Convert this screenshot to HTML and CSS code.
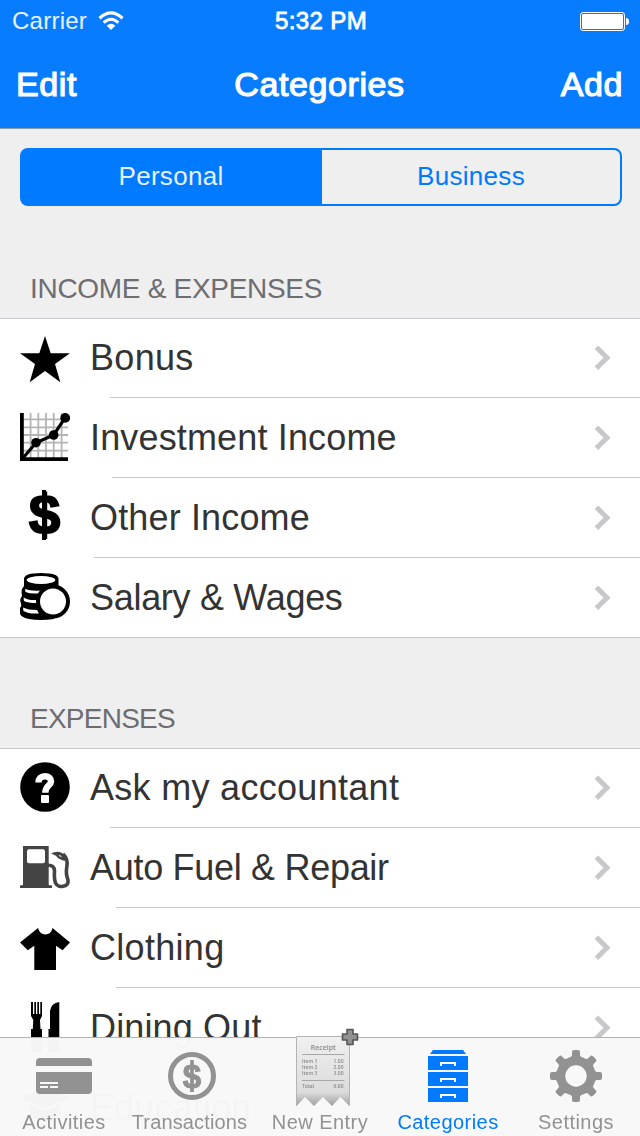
FILE: index.html
```
<!DOCTYPE html>
<html lang="en">
<head>
    <meta charset="UTF-8">
    <meta name="viewport" content="width=device-width, initial-scale=1.0">
    <title>Categories</title>
    <link rel="stylesheet" href="styles.css">
</head>
<body>
    <svg width="0" height="0" class="defs">
        <symbol id="chevron" viewBox="0 0 18 28">
            <path d="M3.400 3.200 L14 13.700 L3.400 24.200" fill="none" stroke="#c7c7cc" stroke-width="5"/>
        </symbol>
    </svg>

    <header class="header">
        <div class="status-bar">
            <div class="carrier">
                <span>Carrier</span>
                <svg class="wifi" width="26" height="20" viewBox="0 0 26 20">
                    <path d="M1.5 7.2 Q13 -3.4 24.5 7.2" fill="none" stroke="#fff" stroke-width="3.2"/>
                    <path d="M5.6 11.6 Q13 4.8 20.4 11.6" fill="none" stroke="#fff" stroke-width="3"/>
                    <path d="M8.7 14.8 Q13 10.6 17.3 14.8 L13 19 Z" fill="#fff"/>
                </svg>
            </div>
            <div class="time">5:32 PM</div>
            <svg class="battery" width="50" height="20" viewBox="0 0 50 20">
                <rect x="0.5" y="1.5" width="44" height="18" rx="2.5" fill="none" stroke="#fff"/>
                <rect x="2" y="3" width="41" height="15" rx="1.2" fill="#fff"/>
                <path d="M46 7 Q49 7 49 10.5 Q49 14 46 14 Z" fill="#fff"/>
            </svg>
        </div>
        <nav class="nav-bar">
            <a class="nav-button">Edit</a>
            <h1>Categories</h1>
            <a class="nav-button right">Add</a>
        </nav>
    </header>

    <main class="content">
        <div class="segmented">
            <div class="segment active">Personal</div>
            <div class="segment">Business</div>
        </div>

        <h2 class="first">INCOME &amp; EXPENSES</h2>
        <ul class="list">
            <li class="row">
                <svg class="icon" viewBox="0 0 50 50">
                    <path d="M25 3 L30.7 20.2 H50 L35 31 L40.3 49.3 L25 38 L9.7 49.3 L15 31 L0 20.2 H19.3 Z"/>
                </svg>
                <span class="label wide">Bonus</span>
                <svg class="chevron"><use href="#chevron"/></svg>
            </li>
            <li class="row inset-112">
                <svg class="icon" viewBox="0 0 50 50">
                    <path d="M10.6 0 V45 M18.3 0 V45 M26 0 V45 M33.7 0 V45 M41.6 0 V45 M3 6.3 H48 M3 14.3 H48 M3 22 H48 M3 29.7 H48 M3 37.7 H48" stroke="#b4b4b4" stroke-width="1.8"/>
                    <path d="M0 0 H3.8 V44.3 H48 V48 H0 Z"/>
                    <path d="M3.5 44.5 L16 29.7 L33.7 22 L45.2 4.7" fill="none" stroke="#000" stroke-width="3.2"/>
                    <circle cx="16" cy="29.7" r="4.8"/>
                    <circle cx="33.7" cy="22" r="4.8"/>
                    <circle cx="45.2" cy="4.9" r="4.9"/>
                </svg>
                <span class="label">Investment Income</span>
                <svg class="chevron"><use href="#chevron"/></svg>
            </li>
            <li class="row inset-94">
                <svg class="icon" viewBox="0 0 50 50">
                    <text x="24.600" y="41" class="dollar">$</text>
                    <path d="M24 -3 V47" stroke="#000" stroke-width="4"/>
                </svg>
                <span class="label">Other Income</span>
                <svg class="chevron"><use href="#chevron"/></svg>
            </li>
            <li class="row last">
                <svg class="icon" viewBox="0 0 50 50">
                    <path d="M4 6 Q4 0 21 0 Q38.5 0 38.5 6 V14 L34 46 Q20 48 9 46 Q0 44 0 40 V35 Q2 33 1 30 Q-1 27 2 23 Q1 19 2 16 L4 13 Z"/>
                    <ellipse cx="21" cy="7" rx="14.3" ry="4" fill="#fff"/>
                    <path d="M5 16 Q11 18.500 22 17.500 L18 20.500 Q10 21 5.500 19 Z" fill="#fff"/>
                    <path d="M3.500 24.500 Q8 27.500 17 27 L16.500 30 Q8 30 4 28 Z" fill="#fff"/>
                    <path d="M3 34.500 Q8 37 17 37 L19 40.500 Q8 41 3.500 38 Z" fill="#fff"/>
                    <circle cx="33" cy="28.500" r="15" fill="#fff" stroke="#000" stroke-width="4"/>
                </svg>
                <span class="label narrow">Salary &amp; Wages</span>
                <svg class="chevron"><use href="#chevron"/></svg>
            </li>
        </ul>

        <h2 class="second">EXPENSES</h2>
        <ul class="list">
            <li class="row">
                <svg class="icon" viewBox="0 0 50 50">
                    <circle cx="25" cy="24" r="24.8"/>
                    <path d="M18.500 19.500 C18.500 15.500 21 13.200 25 13.200 C28.500 13.200 31 15.500 31 18.500 C31 23 25.300 22 25.300 29.800" fill="none" stroke="#fff" stroke-width="6.400"/>
                    <rect x="21" y="32" width="8" height="8" rx="1" fill="#fff"/>
                </svg>
                <span class="label wide">Ask my accountant</span>
                <svg class="chevron"><use href="#chevron"/></svg>
            </li>
            <li class="row inset-116">
                <svg class="icon" viewBox="0 0 50 50">
                    <path d="M3 3 H28.700 V42 L32 42.500 V45 H0 V42.500 L3 42 Z" fill="#444"/>
                    <rect x="7" y="6.300" width="18" height="14" rx="2" fill="#fff"/>
                    <path d="M28 22.200 Q34.500 22 34.500 28 Q34 36 35.500 40 Q38 44.500 43 43.300 Q48.800 42.500 48 37 Q45.500 31 46.800 24 Q48.500 16 43 11" fill="none" stroke="#444" stroke-width="3.600"/>
                    <path d="M31 10.500 Q37 7.500 42 10 Q46 12 47.500 18 L43 17.500 Q38 16 36 12.800 Z" fill="#444"/>
                    <path d="M39 12.500 L41.500 13.500" stroke="#fff" stroke-width="1"/>
                </svg>
                <span class="label narrow">Auto Fuel &amp; Repair</span>
                <svg class="chevron"><use href="#chevron"/></svg>
            </li>
            <li class="row inset-116">
                <svg class="icon" viewBox="0 0 50 50">
                    <path d="M18 5 Q20 11.500 25.300 11.500 Q31 11.500 32.500 5 L50 19.500 L42.500 27.200 L36 22.700 V47 H14.300 V22.700 L7.800 27.200 L0 19.500 Z"/>
                </svg>
                <span class="label wide">Clothing</span>
                <svg class="chevron"><use href="#chevron"/></svg>
            </li>
            <li class="row">
                <svg class="icon" viewBox="0 0 50 50">
                    <path d="M11 -1 H13 V11 H14.300 V-1 H16 V11 H17.300 V-1 H19 V11 H20.300 V-1 H22 V13 L20 17 L20.500 26 H22 V49 H11 V26 H12.800 L13.300 17 L11 13 Z"/>
                    <path d="M39.300 -1 V49 H28.500 V26 H30 V8 Q31 0 39.300 -1 Z"/>
                </svg>
                <span class="label">Dining Out</span>
                <svg class="chevron"><use href="#chevron"/></svg>
            </li>
            <li class="row">
                <svg class="icon" viewBox="0 0 50 50">
                    <path d="M25 5 L50 15 L25 25 L0 15 Z M10 22 L25 28 L40 22 V33 Q25 43 10 33 Z"/>
                </svg>
                <span class="label">Education</span>
            </li>
        </ul>
    </main>

    <footer class="tab-bar">
        <a class="tab">
            <svg class="tab-icon" viewBox="0 0 80 72">
                <path d="M12 28 V24 Q12 20 16 20 H64 Q68 20 68 24 V28 Z M12 34 H68 V52 Q68 56 64 56 H16 Q12 56 12 52 Z"/>
                <path d="M16 45 H34 M16 49 H24 M26 49 H34" stroke="#f7f7f7" stroke-width="2"/>
            </svg>
            <span>Activities</span>
        </a>
        <a class="tab transactions">
            <svg class="tab-icon" viewBox="0 0 80 72">
                <circle cx="40" cy="38" r="21.5" fill="none" stroke="#929292" stroke-width="5"/>
                <text x="40" y="49.500" class="coin-sign">$</text>
                <path d="M40 22 V54" stroke="#929292" stroke-width="3.600"/>
            </svg>
            <span>Transactions</span>
        </a>
        <a class="tab">
            <svg class="tab-icon" viewBox="0 0 80 72">
                <defs>
                    <linearGradient id="paper" x1="0" y1="0" x2="0" y2="1">
                        <stop offset="0" stop-color="#f0f0f0"/>
                        <stop offset="0.8" stop-color="#dcdcdc"/>
                        <stop offset="1" stop-color="#a0a0a0"/>
                    </linearGradient>
                </defs>
                <path d="M16.500 -1.500 H69.500 V68 L60.500 59 L52 68 L43 59 L34 68 L25 59 L16.500 68 Z" fill="url(#paper)"/>
                <path d="M16.500 68 V-1.500 H69.500 V68" fill="none" stroke="#b4b4b4"/>
                <path d="M22 16.500 H64.500 M22 42.500 H64.500" stroke="#a8a8a8"/>
                <g class="receipt-text">
                    <text x="43.300" y="12" class="receipt-title">Receipt</text>
                    <text x="22" y="24.500">Item 1</text>
                    <text x="63.500" y="24.500" class="amount">1.00</text>
                    <text x="22" y="31">Item 2</text>
                    <text x="63.500" y="31" class="amount">2.00</text>
                    <text x="22" y="37.300">Item 3</text>
                    <text x="63.500" y="37.300" class="amount">3.00</text>
                    <text x="22" y="50">Total</text>
                    <text x="63.500" y="50" class="amount">6.00</text>
                </g>
                <path d="M67 -8.500 H73 V-4 H77.500 V2 H73 V6.500 H67 V2 H62.500 V-4 H67 Z" fill="#919191" stroke="#555" stroke-width="1.600" stroke-linejoin="round"/>
            </svg>
            <span>New Entry</span>
        </a>
        <a class="tab active">
            <svg class="tab-icon" viewBox="0 0 80 72">
                <path d="M25 12 H55 L58 16 H22 Z M20 18 H60 V32 H20 Z M20 34 H60 V48 H20 Z M20 50 H60 V64 H20 Z"/>
                <path d="M33 28 V25 H47 V28 M33 44 V41 H47 V44 M33 60 V57 H47 V60" fill="none" stroke="#fff" stroke-width="2"/>
            </svg>
            <span>Categories</span>
        </a>
        <a class="tab">
            <svg class="tab-icon" viewBox="0 0 80 72">
                <circle cx="40" cy="38" r="15.200" fill="none" stroke="#929292" stroke-width="9"/>
                <g id="teeth">
                    <path id="tooth" d="M32.500 22 L36 17.500 V14 Q36 12 38 12 H42 Q44 12 44 14 V17.500 L47.500 22 Z"/>
                    <use href="#tooth" transform="rotate(45 40 38)"/>
                    <use href="#tooth" transform="rotate(90 40 38)"/>
                    <use href="#tooth" transform="rotate(135 40 38)"/>
                </g>
                <use href="#teeth" transform="rotate(180 40 38)"/>
            </svg>
            <span>Settings</span>
        </a>
    </footer>
</body>
</html>
```
FILE: styles.css
```
* {
    box-sizing: border-box;
}
body {
    font-family: "Liberation Sans", Arial, sans-serif;
    margin: 0;
    height: 1136px;
    overflow: hidden;
    background-color: #efefef;
    color: #333;
}
.defs {
    display: block;
}
.header {
    height: 129px;
    background: #087cff;
    border-bottom: 1px solid #8e9aa8;
    color: white;
}
.status-bar {
    display: grid;
    grid-template-columns: 1fr auto 1fr;
    align-items: center;
    height: 41px;
    padding: 0 10px 0 12px;
    font-size: 24px;
}
.carrier {
    display: flex;
    align-items: center;
    gap: 11px;
    letter-spacing: 0.25px;
    color: #e8f2ff;
}
.time {
    letter-spacing: 0.4px;
    -webkit-text-stroke: 0.8px white;
}
.battery {
    justify-self: end;
}
.nav-bar {
    display: grid;
    grid-template-columns: 1fr auto 1fr;
    align-items: center;
    height: 87px;
    padding: 0 17px 0 16px;
    font-size: 34px;
    letter-spacing: 0.6px;
    -webkit-text-stroke: 1.2px white;
}
.nav-bar h1 {
    margin: 0;
    font-size: 34px;
    font-weight: normal;
}
.right {
    text-align: right;
}
.segmented {
    display: flex;
    height: 58px;
    margin: 19px 18px 0 20px;
    border: 2px solid #007aff;
    border-radius: 8px;
}
.segment {
    flex: 1;
    display: flex;
    align-items: center;
    justify-content: center;
    padding-bottom: 2px;
    font-size: 26px;
    letter-spacing: 0.3px;
    color: #007aff;
}
.segment.active {
    flex: 0 0 300px;
    padding-right: 2px;
    background: #007aff;
    color: #e6f0fb;
}
h2 {
    height: 110px;
    margin: 0;
    padding: 64px 30px 0;
    font-size: 28px;
    line-height: 34px;
    font-weight: normal;
    color: #6d6d72;
}
h2.first {
    height: 112px;
    padding-top: 66px;
    letter-spacing: -0.3px;
}
h2.second {
    letter-spacing: -0.75px;
}
.list {
    margin: 0;
    padding: 0;
    list-style: none;
    background: white;
    border-top: 1px solid #c8c7cc;
}
.row {
    display: flex;
    align-items: center;
    height: 80px;
    padding: 0 29px 0 20px;
    background: linear-gradient(#c8c7cc, #c8c7cc) 110px 100% / 100% 1px no-repeat;
}
.row:first-child {
    height: 79px;
    padding-bottom: 1px;
}
.inset-94 {
    background-position-x: 94px;
}
.inset-112 {
    background-position-x: 112px;
}
.inset-116 {
    background-position-x: 116px;
}
.last {
    background-position-x: 0;
}
.icon {
    width: 50px;
    height: 50px;
    margin-right: 20px;
    overflow: visible;
}
.dollar {
    font-size: 56px;
    font-weight: bold;
    text-anchor: middle;
    stroke: black;
    stroke-width: 2px;
}
.label {
    flex: 1;
    font-size: 36px;
    line-height: 44px;
    letter-spacing: 0.15px;
}
.label.wide {
    letter-spacing: 0.3px;
}
.label.narrow {
    letter-spacing: -0.3px;
}
.chevron {
    width: 18px;
    height: 28px;
}
.tab-bar {
    position: fixed;
    left: 0;
    right: 0;
    bottom: 0;
    display: flex;
    height: 99px;
    background: rgba(248, 248, 248, 0.985);
    border-top: 1px solid #b2b2b2;
}
.tab {
    flex: 0 0 128px;
    display: flex;
    flex-direction: column;
    align-items: center;
    font-size: 20px;
    line-height: 24px;
    letter-spacing: 0.45px;
    color: #929292;
}
.tab.transactions {
    letter-spacing: 0.15px;
}
.tab.transactions span {
    margin-right: 5px;
}
.tab.active {
    color: #007aff;
}
.tab-icon {
    width: 80px;
    height: 72px;
    fill: currentColor;
    overflow: visible;
}
.coin-sign {
    font-size: 33px;
    font-weight: bold;
    letter-spacing: 0;
    text-anchor: middle;
    stroke: currentColor;
    stroke-width: 1px;
}
.receipt-text {
    font-family: "Open Sans", sans-serif;
    font-size: 5px;
    font-weight: 600;
    letter-spacing: 0;
    fill: #888;
}
.receipt-title {
    font-size: 7px;
    text-anchor: middle;
}
.amount {
    text-anchor: end;
}
```
